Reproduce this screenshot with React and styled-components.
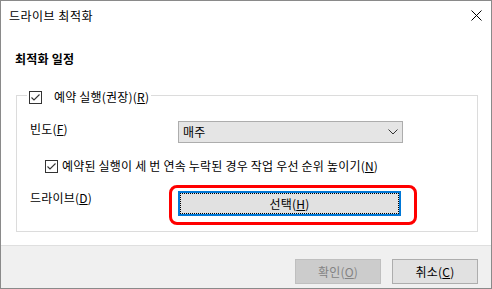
import React from "react";
import styled, { createGlobalStyle } from "styled-components";

const GlobalStyle = createGlobalStyle`
  html, body {
    margin: 0;
    padding: 0;
    background: #ffffff;
  }
  body {
    font-family: "Noto Sans CJK KR", "Noto Sans", sans-serif;
    font-size: 12px;
    letter-spacing: 0.2px;
    color: #000;
  }
`;

const Check = () => (
  <CheckBox>
    <svg width="13" height="13" viewBox="0 0 13 13">
      <rect x="0.5" y="0.5" width="12" height="12" fill="#fff" stroke="#333" />
      <path d="M2.5 6.5 L5 9 L10.5 3.5" fill="none" stroke="#333" strokeWidth="1.1" />
    </svg>
  </CheckBox>
);

export default function App() {
  return (
    <Window>
      <GlobalStyle />
      <TitleBar>
        <Title>드라이브 최적화</Title>
        <svg width="11" height="11" viewBox="0 0 11 11">
          <path d="M0.5 0.5 L10.5 10.5 M10.5 0.5 L0.5 10.5" stroke="#000" strokeWidth="1" />
        </svg>
      </TitleBar>
      <Body>
        <Heading>최적화 일정</Heading>
        <GroupBox>
          <Legend>
            <Check />
            <span>
              예약 실행(권장)(<U>R</U>)
            </span>
          </Legend>
          <Rows>
            <Row>
              <Label>
                빈도(<U>F</U>)
              </Label>
              <Combo>
                <span>매주</span>
                <svg width="10" height="6" viewBox="0 0 10 6">
                  <path d="M0.5 0.5 L5 5 L9.5 0.5" fill="none" stroke="#333" strokeWidth="1" />
                </svg>
              </Combo>
            </Row>
            <CheckRow>
              <Check />
              <span>
                예약된 실행이 세 번 연속 누락된 경우 작업 우선 순위 높이기(<U>N</U>)
              </span>
            </CheckRow>
            <Row>
              <Label>
                드라이브(<U>D</U>)
              </Label>
              <SelectButton>
                선택(<U>H</U>)
              </SelectButton>
            </Row>
          </Rows>
        </GroupBox>
      </Body>
      <Footer>
        <DialogButton disabled>
          확인(<U>O</U>)
        </DialogButton>
        <DialogButton>
          취소(<U>C</U>)
        </DialogButton>
      </Footer>
    </Window>
  );
}

const Window = styled.div`
  width: 492px;
  height: 289px;
  box-sizing: border-box;
  border: 1px solid #8a8a8a;
  display: flex;
  flex-direction: column;
  background: #fff;
  line-height: 16px;
`;

const TitleBar = styled.div`
  height: 30px;
  display: flex;
  align-items: center;
  justify-content: space-between;
  padding: 0 9px 0 8px;
  svg {
    display: block;
  }
`;

const Title = styled.span`
  font-size: 12px;
  letter-spacing: 0.5px;
`;

const Body = styled.div`
  flex: 1;
  padding: 0 13px 13px 15px;
  display: flex;
  flex-direction: column;
`;

const Heading = styled.div`
  font-weight: 700;
  margin: 21px 0 19px -1px;
`;

const GroupBox = styled.fieldset`
  margin: 0;
  min-width: 0;
  border: 1px solid #dcdcdc;
  padding: 0 0 15px 13px;
`;

const Legend = styled.legend`
  display: flex;
  align-items: center;
  gap: 12px;
  margin-left: -3px;
  padding: 4px 2px 0;
  line-height: 14px;
`;

const CheckBox = styled.span`
  display: block;
  width: 13px;
  height: 13px;
  svg {
    display: block;
  }
`;

const Rows = styled.div`
  display: flex;
  flex-direction: column;
  padding-top: 17px;
`;

const Row = styled.div`
  display: grid;
  grid-template-columns: 148px auto;
  align-items: start;
`;

const Label = styled.span``;

const Combo = styled.div`
  width: 225px;
  height: 22px;
  box-sizing: border-box;
  background: #e5e5e5;
  border: 1px solid #adadad;
  display: flex;
  align-items: center;
  justify-content: space-between;
  padding: 0 4px 1px 4px;
  svg {
    display: block;
    margin-top: 1px;
  }
`;

const CheckRow = styled.div`
  display: flex;
  align-items: center;
  gap: 4px;
  margin: 15px 0 16px 15px;
`;

const SelectButton = styled.div`
  position: relative;
  width: 223px;
  height: 25px;
  margin-top: 1px;
  box-sizing: border-box;
  background: #e1e1e1;
  border: 2px solid #0078d7;
  outline: 1px dotted #000;
  outline-offset: -3px;
  display: flex;
  align-items: center;
  justify-content: center;
  &::after {
    content: "";
    position: absolute;
    top: -8px;
    left: -11px;
    right: -18px;
    bottom: -11px;
    border: 3px solid #ff0000;
    border-radius: 8px;
  }
`;

const Footer = styled.div`
  height: 43px;
  box-sizing: border-box;
  background: #f0f0f0;
  border-top: 1px solid #dfdfdf;
  display: flex;
  justify-content: flex-end;
  gap: 11px;
  padding: 13px 13px 0 0;
`;

const DialogButton = styled.div`
  width: 86px;
  height: 25px;
  box-sizing: border-box;
  display: flex;
  align-items: center;
  justify-content: center;
  background: ${(p) => (p.disabled ? "#cccccc" : "#e1e1e1")};
  border: 1px solid ${(p) => (p.disabled ? "#bfbfbf" : "#adadad")};
  color: ${(p) => (p.disabled ? "#838383" : "#000")};
`;

const U = styled.span`
  text-decoration: underline;
`;
